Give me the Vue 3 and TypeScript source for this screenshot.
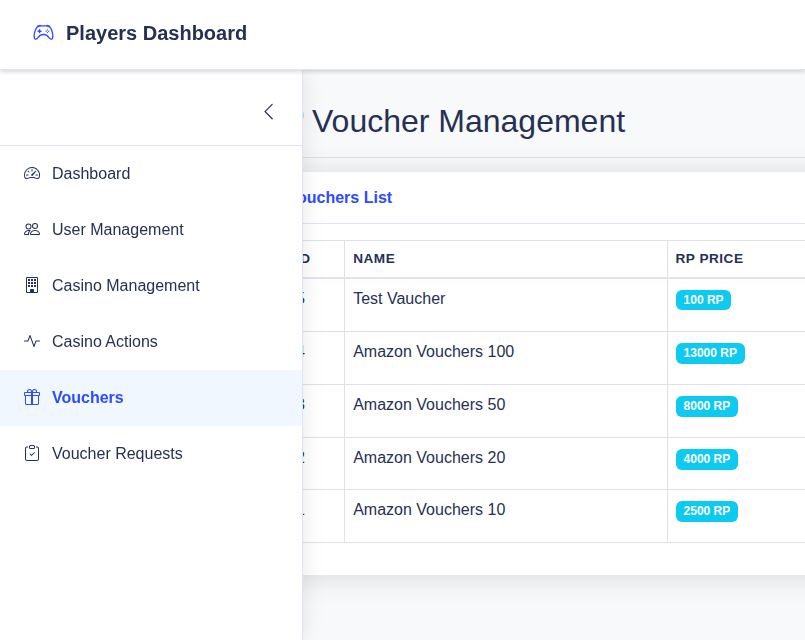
<script setup lang="ts">
interface NavItem {
  label: string
  icon: string
  active?: boolean
}
interface Voucher {
  id: number
  name: string
  price: number
}

const icons: Record<string, string> = {
  controller:
    'M11.5 6.027a.5.5 0 1 1-1 0 .5.5 0 0 1 1 0m-1.5 1.5a.5.5 0 1 0 0-1 .5.5 0 0 0 0 1m2.5-.5a.5.5 0 1 1-1 0 .5.5 0 0 1 1 0m-1.5 1.5a.5.5 0 1 0 0-1 .5.5 0 0 0 0 1m-6.5-3h1v1h1v1h-1v1h-1v-1h-1v-1h1zM3.051 3.26a.5.5 0 0 1 .354-.613l1.932-.518a.5.5 0 0 1 .62.39c.655-.079 1.35-.117 2.043-.117.72 0 1.443.041 2.12.126a.5.5 0 0 1 .622-.399l1.932.518a.5.5 0 0 1 .306.729q.211.136.373.297c.408.408.78 1.05 1.095 1.772.32.733.599 1.591.805 2.466s.34 1.78.364 2.606c.024.816-.059 1.602-.328 2.21a1.42 1.42 0 0 1-1.445.83c-.636-.067-1.115-.394-1.513-.773-.245-.232-.496-.526-.739-.808-.126-.148-.25-.292-.368-.423-.728-.804-1.597-1.527-3.224-1.527s-2.496.723-3.224 1.527c-.119.131-.242.275-.368.423-.243.282-.494.575-.739.808-.398.38-.877.706-1.513.773a1.42 1.42 0 0 1-1.445-.83c-.27-.608-.352-1.395-.329-2.21.024-.826.16-1.73.365-2.606.206-.875.486-1.733.805-2.466.315-.722.687-1.364 1.094-1.772a2.3 2.3 0 0 1 .433-.335l-.028-.079zm2.036.412c-.877.185-1.469.443-1.733.708-.276.276-.587.783-.885 1.465a14 14 0 0 0-.748 2.295 12.4 12.4 0 0 0-.339 2.406c-.022.755.062 1.368.243 1.776a.42.42 0 0 0 .426.24c.327-.034.61-.199.929-.502.212-.202.4-.423.615-.674.133-.156.276-.323.44-.504C4.861 9.969 5.978 9.027 8 9.027s3.139.942 3.965 1.855c.164.181.307.348.44.504.214.251.403.472.615.674.318.303.601.468.929.503a.42.42 0 0 0 .426-.241c.18-.408.265-1.02.243-1.776a12.4 12.4 0 0 0-.339-2.406 14 14 0 0 0-.748-2.295c-.298-.682-.61-1.19-.885-1.465-.264-.265-.856-.523-1.733-.708-.85-.179-1.877-.27-2.913-.27s-2.063.091-2.913.27',
  chevron:
    'M11.354 1.646a.5.5 0 0 1 0 .708L5.707 8l5.647 5.646a.5.5 0 0 1-.708.708l-6-6a.5.5 0 0 1 0-.708l6-6a.5.5 0 0 1 .708 0',
  speedometer:
    'M8 4a.5.5 0 0 1 .5.5V6a.5.5 0 0 1-1 0V4.5A.5.5 0 0 1 8 4M3.732 5.732a.5.5 0 0 1 .707 0l.915.914a.5.5 0 1 1-.708.708l-.914-.915a.5.5 0 0 1 0-.707M2 10a.5.5 0 0 1 .5-.5h1.586a.5.5 0 0 1 0 1H2.5A.5.5 0 0 1 2 10m9.5 0a.5.5 0 0 1 .5-.5h1.5a.5.5 0 0 1 0 1H12a.5.5 0 0 1-.5-.5m.754-4.246a.39.39 0 0 0-.527-.02L7.547 9.31a.91.91 0 1 0 1.302 1.258l3.434-4.297a.39.39 0 0 0-.029-.518zM0 10a8 8 0 1 1 15.547 2.661c-.442 1.253-1.845 1.602-2.932 1.25C11.309 13.488 9.475 13 8 13c-1.474 0-3.31.488-4.615.911-1.087.352-2.49.003-2.932-1.25A8 8 0 0 1 0 10m8-7a7 7 0 0 0-6.603 9.329c.203.575.923.876 1.68.63C4.397 12.533 6.358 12 8 12s3.604.532 4.923.96c.757.245 1.477-.056 1.68-.631A7 7 0 0 0 8 3',
  people:
    'M15 14s1 0 1-1-1-4-5-4-5 3-5 4 1 1 1 1zm-7.978-1L7 12.996c.001-.264.167-1.03.76-1.72C8.312 10.629 9.282 10 11 10c1.717 0 2.687.63 3.24 1.276.593.69.758 1.457.76 1.72l-.008.002-.014.002zM11 7a2 2 0 1 0 0-4 2 2 0 0 0 0 4m3-2a3 3 0 1 1-6 0 3 3 0 0 1 6 0M6.936 9.28a6 6 0 0 0-1.23-.247A7 7 0 0 0 5 9c-4 0-5 3-5 4q0 1 1 1h4.216A2.24 2.24 0 0 1 5 13c0-1.01.377-2.042 1.09-2.904.243-.294.526-.569.846-.816M4.92 10A5.5 5.5 0 0 0 4 13H1c0-.26.164-1.03.76-1.724.545-.636 1.492-1.256 3.16-1.275ZM1.5 5.5a3 3 0 1 1 6 0 3 3 0 0 1-6 0m3-2a2 2 0 1 0 0 4 2 2 0 0 0 0-4',
  building:
    'M3 0h10a1 1 0 0 1 1 1v14a1 1 0 0 1-1 1H3a1 1 0 0 1-1-1V1a1 1 0 0 1 1-1M3 1v14h3v-2.5a.5.5 0 0 1 .5-.5h3a.5.5 0 0 1 .5.5V15h3V1zM4 2h2v2h-2zM7 2h2v2h-2zM10 2h2v2h-2zM4 5h2v2h-2zM7 5h2v2h-2zM10 5h2v2h-2zM4 8h2v2h-2zM7 8h2v2h-2zM10 8h2v2h-2z',
  activity:
    'M6 2a.5.5 0 0 1 .47.33L10 12.036l1.53-4.208A.5.5 0 0 1 12 7.5h3.5a.5.5 0 0 1 0 1h-3.15l-1.88 5.17a.5.5 0 0 1-.94 0L6 3.964 4.47 8.171A.5.5 0 0 1 4 8.5H.5a.5.5 0 0 1 0-1h3.15l1.88-5.17A.5.5 0 0 1 6 2',
  gift:
    'M3 2.5a2.5 2.5 0 0 1 5 0 2.5 2.5 0 0 1 5 0v.006c0 .07 0 .27-.038.494H15a1 1 0 0 1 1 1v2a1 1 0 0 1-1 1v7.5a1.5 1.5 0 0 1-1.5 1.5h-11A1.5 1.5 0 0 1 1 14.5V7a1 1 0 0 1-1-1V4a1 1 0 0 1 1-1h2.038A3 3 0 0 1 3 2.506zm1.068.5H7v-.5a1.5 1.5 0 1 0-3 0c0 .085.002.274.045.43zM9 3h2.932l.023-.07c.043-.156.045-.345.045-.43a1.5 1.5 0 0 0-3 0zM1 4v2h6V4zm8 0v2h6V4zm5 3H9v8h4.5a.5.5 0 0 0 .5-.5zm-7 8V7H2v7.5a.5.5 0 0 0 .5.5z',
  clipboard:
    'M10.854 7.146a.5.5 0 0 1 0 .708l-3 3a.5.5 0 0 1-.708 0l-1.5-1.5a.5.5 0 1 1 .708-.708L7.5 9.793l2.646-2.647a.5.5 0 0 1 .708 0M4 1.5H3a2 2 0 0 0-2 2V14a2 2 0 0 0 2 2h10a2 2 0 0 0 2-2V3.5a2 2 0 0 0-2-2h-1v1h1a1 1 0 0 1 1 1V14a1 1 0 0 1-1 1H3a1 1 0 0 1-1-1V3.5a1 1 0 0 1 1-1h1zM9.5 1a.5.5 0 0 1 .5.5v1a.5.5 0 0 1-.5.5h-3a.5.5 0 0 1-.5-.5v-1a.5.5 0 0 1 .5-.5zm-3-1A1.5 1.5 0 0 0 5 1.5v1A1.5 1.5 0 0 0 6.5 4h3A1.5 1.5 0 0 0 11 2.5v-1A1.5 1.5 0 0 0 9.5 0z',
}

const nav: NavItem[] = [
  { label: 'Dashboard', icon: 'speedometer' },
  { label: 'User Management', icon: 'people' },
  { label: 'Casino Management', icon: 'building' },
  { label: 'Casino Actions', icon: 'activity' },
  { label: 'Vouchers', icon: 'gift', active: true },
  { label: 'Voucher Requests', icon: 'clipboard' },
]

const vouchers: Voucher[] = [
  { id: 5, name: 'Test Vaucher', price: 100 },
  { id: 4, name: 'Amazon Vouchers 100', price: 13000 },
  { id: 3, name: 'Amazon Vouchers 50', price: 8000 },
  { id: 2, name: 'Amazon Vouchers 20', price: 4000 },
  { id: 1, name: 'Amazon Vouchers 10', price: 2500 },
]
</script>

<template>
  <div class="app">
    <header class="topbar">
      <svg class="brand-icon" viewBox="0 0 16 16"><path :d="icons.controller" /></svg>
      <span class="brand">Players Dashboard</span>
    </header>
    <div class="body">
      <main class="main">
        <h1 class="title">
          <svg class="title-icon" viewBox="0 0 16 16"><path :d="icons.gift" /></svg>
          <span>Voucher Management</span>
        </h1>
        <section class="card">
          <div class="card-head">Vouchers List</div>
          <div class="card-body">
            <table class="table">
              <colgroup>
                <col class="col-id" />
                <col class="col-name" />
                <col class="col-price" />
              </colgroup>
              <thead>
                <tr>
                  <th>ID</th>
                  <th class="name">Name</th>
                  <th>RP Price</th>
                </tr>
              </thead>
              <tbody>
                <tr v-for="v in vouchers" :key="v.id">
                  <td class="id">{{ v.id }}</td>
                  <td class="name">{{ v.name }}</td>
                  <td><span class="badge">{{ v.price }} RP</span></td>
                </tr>
              </tbody>
            </table>
          </div>
        </section>
      </main>
      <aside class="sidebar">
        <div class="sidebar-head">
          <svg class="collapse" viewBox="0 0 16 16"><path :d="icons.chevron" /></svg>
        </div>
        <nav>
          <a v-for="item in nav" :key="item.label" class="nav-item" :class="{ active: item.active }">
            <svg class="nav-icon" viewBox="0 0 16 16"><path fill-rule="evenodd" :d="icons[item.icon]" /></svg>
            <span>{{ item.label }}</span>
          </a>
        </nav>
      </aside>
    </div>
  </div>
</template>

<style>
body {
  margin: 0;
  overflow: hidden;
}
</style>

<style scoped>
* {
  box-sizing: border-box;
}
.app {
  display: flex;
  flex-direction: column;
  height: 640px;
  overflow: hidden;
  background: #f8f9fb;
  color: #263054;
  font: 16px/24px 'Liberation Sans', Arial, sans-serif;
}
svg {
  display: block;
  flex: none;
  fill: currentColor;
}
.topbar {
  position: relative;
  z-index: 3;
  display: flex;
  flex: none;
  align-items: center;
  gap: 12px;
  height: 70px;
  padding: 0 32px 3px;
  background: #fff;
  border-bottom: 1px solid #e2e3f0;
  box-shadow: 0 2px 4px rgba(0, 0, 0, 0.15);
  will-change: transform;
}
.brand-icon {
  width: 21px;
  height: 21px;
  margin: 0 0 1px 1px;
  color: #2d4cff;
}
.brand {
  font-size: 20px;
  font-weight: 700;
}
.body {
  position: relative;
  flex: 1;
  min-height: 0;
}
.sidebar {
  position: absolute;
  inset: 0 auto 0 0;
  z-index: 2;
  width: 303px;
  background: #fff;
  border-right: 1px solid #e2e3f0;
  box-shadow: 0 0 20px rgba(0, 0, 0, 0.1);
  will-change: transform;
}
.sidebar-head {
  display: flex;
  align-items: center;
  justify-content: flex-end;
  height: 76px;
  padding: 9px 24px 0 0;
  border-bottom: 1px solid #e2e3f0;
}
.collapse {
  width: 19.2px;
  height: 19.2px;
}
.nav-item {
  display: flex;
  align-items: center;
  gap: 12px;
  height: 56px;
  padding: 0 24px;
}
.nav-icon {
  width: 16px;
  height: 16px;
  margin-bottom: 2px;
}
.nav-item.active {
  background: #f0f7ff;
  color: #2d4cff;
  font-weight: 700;
}
.main {
  width: 1240px;
  padding: 32px 24px 0 272px;
}
.title {
  display: flex;
  align-items: center;
  gap: 8px;
  height: 56px;
  margin: 0 0 14px;
  padding-bottom: 17px;
  border-bottom: 1px solid #dee0e5;
  font-size: 32px;
  font-weight: 400;
  line-height: 38px;
}
.title-icon {
  width: 31.5px;
  height: 32px;
  margin-right: 0.5px;
  color: #6cc4ff;
}
.card {
  height: 403px;
  background: #fff;
  box-shadow: 0 2px 28px rgba(0, 0, 0, 0.13);
}
.card-head {
  height: 52px;
  padding: 14px 15.5px 0;
  border-bottom: 1px solid #e2e3f0;
  color: #2d4cff;
  font-weight: 700;
}
.card-body {
  padding: 16px;
}
.table {
  width: 100%;
  table-layout: fixed;
  border-collapse: collapse;
}
.col-id {
  width: 56px;
}
.col-name {
  width: 323px;
}
th,
td {
  padding: 8px;
  border: 1px solid #dee0ea;
  text-align: left;
  vertical-align: top;
}
thead tr {
  height: 37px;
}
th {
  padding: 8px 7.5px 6.5px;
  border-bottom: 2px solid #e2e3f0;
  font-size: 13.6px;
  line-height: 20.4px;
  letter-spacing: 0.5px;
  text-transform: uppercase;
}
th:first-child,
.id {
  padding-left: 7px;
}
.name {
  padding-left: 8.2px;
}
tbody tr {
  height: 53px;
}
tbody tr:first-child {
  height: 54px;
}
tbody tr:nth-child(4) {
  height: 52px;
}
.badge {
  display: inline-block;
  padding: 4.2px 7.6px;
  border-radius: 6px;
  background: #0dcaf0;
  color: #fff;
  font-size: 12px;
  font-weight: 700;
  line-height: 1;
  vertical-align: -0.4px;
}
</style>
